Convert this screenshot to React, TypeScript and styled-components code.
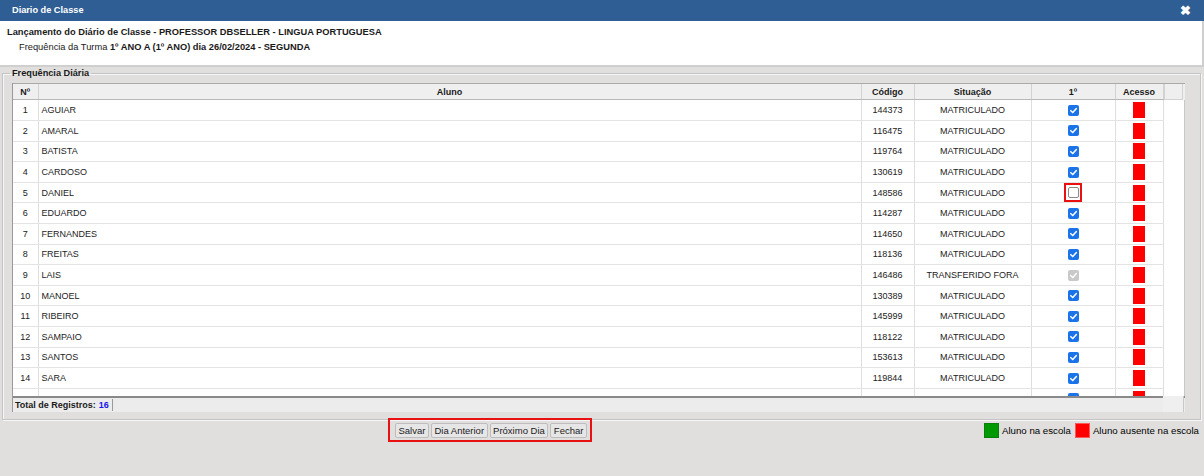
import React from 'react';
import styled, { createGlobalStyle } from 'styled-components';

const GlobalStyle = createGlobalStyle`
  html, body {
    margin: 0;
    padding: 0;
    background: #e0dfdd;
    font-family: "Liberation Sans", Arial, sans-serif;
    font-size: 9px;
    color: #1a1a1a;
  }
  * { box-sizing: border-box; }
`;

const Window = styled.div`
  width: 1204px;
  height: 476px;
  overflow: hidden;
`;

const TitleBar = styled.div`
  height: 21px;
  background: #2f5e95;
  color: #fff;
  display: flex;
  align-items: center;
  justify-content: space-between;
  padding: 0 13px 1px 12px;
  font-weight: bold;
  font-size: 9.2px;
`;

const CloseIcon = styled.span`
  font-size: 13px;
  line-height: 1;
  font-weight: bold;
`;

const InfoPanel = styled.div`
  background: #fff;
  height: 46px;
  border-right: 2px solid #cfcfcf;
  border-bottom: 2px solid #cfcfcf;
  padding: 4px 0 0 7px;
  line-height: 15px;
  font-size: 9.3px;
`;

const InfoTitle = styled.div`
  font-weight: bold;
`;

const InfoLine = styled.div`
  padding-left: 12px;
  b { font-weight: bold; }
`;

const Fieldset = styled.fieldset`
  margin: 1px 3px 0 2px;
  padding: 0 15px 7px 9px;
  border: 1px solid #c4c4c4;
  box-shadow: inset 1px 1px 0 #f6f6f6, 1px 1px 0 #f6f6f6;
  min-width: 0;
`;

const Legend = styled.legend`
  font-weight: bold;
  padding: 0 2px;
  margin-left: -2px;
  line-height: 10px;
  font-size: 9.2px;
`;

const Grid = styled.div`
  border-left: 1px solid #9a9a9a;
  background: #fff;
  margin-top: 5px;
`;

const Table = styled.table`
  width: 1150px;
  table-layout: fixed;
  border-collapse: collapse;
`;

const HeadRow = styled.div`
  display: flex;
  background: #efefef;
  border-top: 1px solid #a9a9a9;
`;

const HeadCell = styled.th`
  height: 15px;
  font-weight: bold;
  text-align: center;
  background: #efefef;
  border-right: 1px solid #d2d2d2;
  border-bottom: 1px solid #b8b8b8;
  padding: 0;
`;

const ScrollCorner = styled.div`
  width: 19px;
  height: 16px;
  background: #efefef;
  border: 1px solid #d2d2d2;
  border-top: none;
`;

const Body = styled.div`
  display: flex;
  height: 296px;
  overflow: hidden;
`;

const Gutter = styled.div`
  width: 21px;
  background: #fff;
  border-right: 1px solid #c8c8c8;
`;

const Row = styled.tr`
  height: 20.6px;
`;

const Cell = styled.td<{ $align?: 'left' | 'center' }>`
  text-align: ${p => p.$align || 'center'};
  padding: ${p => (p.$align === 'left' ? '0 3px' : '0')};
  border-right: 1px solid #dedede;
  border-bottom: 1px solid #e3e3e3;
  white-space: nowrap;
  overflow: hidden;
  color: #222;
  line-height: 12px;
`;

const CheckWrap = styled.span<{ $flag?: boolean }>`
  display: inline-flex;
  align-items: center;
  justify-content: center;
  width: 18px;
  height: 19px;
  vertical-align: middle;
  border: 2px solid ${p => (p.$flag ? '#e81010' : 'transparent')};
`;

const Check = styled.span<{ $state: 'on' | 'off' | 'disabled' }>`
  display: inline-flex;
  align-items: center;
  justify-content: center;
  width: 11px;
  height: 11px;
  border-radius: 2px;
  background: ${p => (p.$state === 'on' ? '#1a73e8' : p.$state === 'disabled' ? '#c9c9c9' : '#fff')};
  border: ${p => (p.$state === 'off' ? '1px solid #8a8a8a' : 'none')};
`;

const AccessBlock = styled.span`
  display: inline-block;
  width: 12px;
  height: 16px;
  background: #ff0000;
  vertical-align: middle;
`;

const Footer = styled.div`
  display: flex;
  height: 16px;
  border-top: 2px solid #8a8a8a;
  background: #ececec;
`;

const FooterMain = styled.div`
  width: 1150px;
  display: flex;
  align-items: center;
  padding-left: 2px;
  font-weight: bold;
`;

const Total = styled.span`
  color: #1515f0;
  margin-left: 3px;
  padding-right: 3px;
  border-right: 1px solid #9a9a9a;
  line-height: 12px;
`;

const FooterEnd = styled.div`
  width: 21px;
  background: #efefef;
  border-right: 1px solid #c8c8c8;
  margin-top: -2px;
`;

const BottomBar = styled.div`
  display: flex;
  align-items: flex-start;
  height: 30px;
`;

const ButtonGroup = styled.div`
  margin-left: 388px;
  margin-top: -2px;
  display: flex;
  gap: 2px;
  padding: 3px 3px 2px 5px;
  border: 2px solid #e81010;
`;

const Button = styled.button`
  font-family: "Liberation Sans", Arial, sans-serif;
  font-size: 9.5px;
  height: 15px;
  padding: 0 2.5px;
  background: #e6e6e6;
  color: #222;
  border: 1px solid #bdbdbd;
  border-radius: 2px;
  line-height: 13px;
`;

const Captions = styled.div`
  margin-left: auto;
  margin-top: 3px;
  margin-right: 4px;
  display: flex;
  align-items: center;
  gap: 3px;
  font-size: 9.7px;
`;

const Swatch = styled.span<{ $color: string; $edge: string }>`
  width: 15px;
  height: 15px;
  background: ${p => p.$color};
  border: 1px solid ${p => p.$edge};
`;

const CaptionText = styled.span`
  margin-right: 1px;
  color: #000;
`;

type Status = 'on' | 'off' | 'disabled';

const students: { name: string; code: string; situation: string; status: Status }[] = [
  { name: 'AGUIAR', code: '144373', situation: 'MATRICULADO', status: 'on' },
  { name: 'AMARAL', code: '116475', situation: 'MATRICULADO', status: 'on' },
  { name: 'BATISTA', code: '119764', situation: 'MATRICULADO', status: 'on' },
  { name: 'CARDOSO', code: '130619', situation: 'MATRICULADO', status: 'on' },
  { name: 'DANIEL', code: '148586', situation: 'MATRICULADO', status: 'off' },
  { name: 'EDUARDO', code: '114287', situation: 'MATRICULADO', status: 'on' },
  { name: 'FERNANDES', code: '114650', situation: 'MATRICULADO', status: 'on' },
  { name: 'FREITAS', code: '118136', situation: 'MATRICULADO', status: 'on' },
  { name: 'LAIS', code: '146486', situation: 'TRANSFERIDO FORA', status: 'disabled' },
  { name: 'MANOEL', code: '130389', situation: 'MATRICULADO', status: 'on' },
  { name: 'RIBEIRO', code: '145999', situation: 'MATRICULADO', status: 'on' },
  { name: 'SAMPAIO', code: '118122', situation: 'MATRICULADO', status: 'on' },
  { name: 'SANTOS', code: '153613', situation: 'MATRICULADO', status: 'on' },
  { name: 'SARA', code: '119844', situation: 'MATRICULADO', status: 'on' },
  { name: 'SILVA', code: '120457', situation: 'MATRICULADO', status: 'on' },
  { name: 'VIEIRA', code: '131702', situation: 'MATRICULADO', status: 'on' },
];

const widths = [25, 823, 53, 117, 84, 48];

const Cols = () => (
  <colgroup>
    {widths.map((w, i) => (
      <col key={i} style={{ width: w }} />
    ))}
  </colgroup>
);

const Tick = () => (
  <svg width="9" height="9" viewBox="0 0 10 10">
    <path d="M2 5.2 L4.2 7.3 L8.2 2.8" fill="none" stroke="#fff" strokeWidth="1.7" strokeLinecap="round" strokeLinejoin="round" />
  </svg>
);

const App: React.FC = () => {
  return (
    <Window>
      <GlobalStyle />
      <TitleBar>
        <span>Diario de Classe</span>
        <CloseIcon>✖</CloseIcon>
      </TitleBar>
      <InfoPanel>
        <InfoTitle>Lançamento do Diário de Classe - PROFESSOR DBSELLER - LINGUA PORTUGUESA</InfoTitle>
        <InfoLine>
          Frequência da Turma <b>1º ANO A (1º ANO) dia 26/02/2024 - SEGUNDA</b>
        </InfoLine>
      </InfoPanel>
      <Fieldset>
        <Legend>Frequência Diária</Legend>
        <Grid>
          <HeadRow>
            <Table>
              <Cols />
              <thead>
                <tr>
                  <HeadCell>Nº</HeadCell>
                  <HeadCell>Aluno</HeadCell>
                  <HeadCell>Código</HeadCell>
                  <HeadCell>Situação</HeadCell>
                  <HeadCell>1º</HeadCell>
                  <HeadCell>Acesso</HeadCell>
                </tr>
              </thead>
            </Table>
            <ScrollCorner />
          </HeadRow>
          <Body>
            <Table>
              <Cols />
              <tbody>
                {students.map((s, i) => (
                  <Row key={s.code}>
                    <Cell>{i + 1}</Cell>
                    <Cell $align="left">{s.name}</Cell>
                    <Cell>{s.code}</Cell>
                    <Cell>{s.situation}</Cell>
                    <Cell>
                      <CheckWrap $flag={s.status === 'off'}>
                        <Check $state={s.status}>{s.status !== 'off' && <Tick />}</Check>
                      </CheckWrap>
                    </Cell>
                    <Cell>
                      <AccessBlock />
                    </Cell>
                  </Row>
                ))}
              </tbody>
            </Table>
            <Gutter />
          </Body>
          <Footer>
            <FooterMain>
              Total de Registros:<Total>16</Total>
            </FooterMain>
            <FooterEnd />
          </Footer>
        </Grid>
      </Fieldset>
      <BottomBar>
        <ButtonGroup>
          <Button>Salvar</Button>
          <Button>Dia Anterior</Button>
          <Button>Próximo Dia</Button>
          <Button>Fechar</Button>
        </ButtonGroup>
        <Captions>
          <Swatch $color="#009a00" $edge="#0b7d0b" />
          <CaptionText>Aluno na escola</CaptionText>
          <Swatch $color="#ff0000" $edge="#ff5a5a" />
          <CaptionText>Aluno ausente na escola</CaptionText>
        </Captions>
      </BottomBar>
    </Window>
  );
};

export default App;
